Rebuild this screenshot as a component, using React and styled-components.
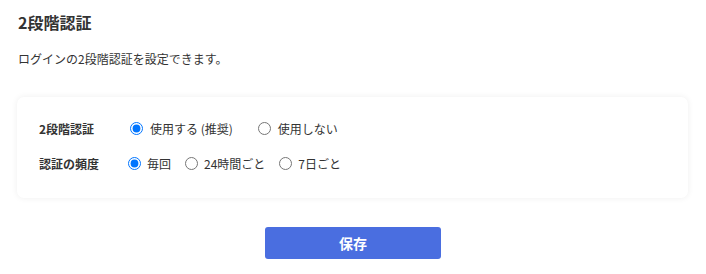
import React, { useState } from 'react'
import styled, { createGlobalStyle } from 'styled-components'

const GlobalStyle = createGlobalStyle`
  body {
    margin: 0;
    background: #ffffff;
    font-family: "Noto Sans CJK JP", "Noto Sans", sans-serif;
    color: #333333;
  }
`

const Page = styled.div`
  padding: 10px 18px 0 18px;
`

const Title = styled.h2`
  margin: 0;
  font-size: 16px;
  line-height: 24px;
  font-weight: 700;
  color: #333333;
`

const Description = styled.p`
  margin: 16px 0 0 0;
  font-size: 12px;
  line-height: 18px;
  color: #333333;
`

const Card = styled.section`
  margin-top: 29px;
  margin-left: -1px;
  background: #ffffff;
  border-radius: 7px;
  box-shadow: 0 0 6px rgba(0, 0, 0, 0.07);
  padding: 19px 22px 23px 22px;
  display: flex;
  flex-direction: column;
  gap: 11px;
`

const Row = styled.div`
  display: flex;
  align-items: center;
  height: 24px;
`

const Label = styled.span`
  width: 84px;
  flex-shrink: 0;
  font-size: 12px;
  font-weight: 700;
  color: #333333;
`

const Options = styled.div`
  display: flex;
  align-items: center;
  padding-left: ${p => p.$indent || 0}px;
`

const Option = styled.label`
  display: flex;
  align-items: center;
  gap: ${p => p.$gap || 3}px;
  margin-right: ${p => p.$space || 9}px;
  font-size: 12px;
  color: #333333;
  white-space: pre;
  cursor: pointer;
`

const Radio = styled.input`
  margin: 0 3px 0 5px;
  width: 13px;
  height: 13px;
`

const Actions = styled.div`
  display: flex;
  justify-content: center;
  margin-top: 29px;
`

const SaveButton = styled.button`
  width: 176px;
  height: 32px;
  border: none;
  border-radius: 3px;
  background: #4a6ee0;
  color: #ffffff;
  font-family: inherit;
  font-size: 14px;
  font-weight: 700;
  cursor: pointer;
`

export default function App() {
  const [enabled, setEnabled] = useState('on')
  const [freq, setFreq] = useState('every')

  return (
    <>
      <GlobalStyle />
      <Page>
        <Title>2段階認証</Title>
        <Description>ログインの2段階認証を設定できます。</Description>
        <Card>
          <Row>
            <Label>2段階認証</Label>
            <Options $indent={2}>
              <Option $space={20} $gap={4}>
                <Radio type="radio" name="tfa" checked={enabled === 'on'} onChange={() => setEnabled('on')} />
                使用する (推奨)
              </Option>
              <Option $gap={4}>
                <Radio type="radio" name="tfa" checked={enabled === 'off'} onChange={() => setEnabled('off')} />
                使用しない
              </Option>
            </Options>
          </Row>
          <Row>
            <Label>認証の頻度</Label>
            <Options>
              <Option>
                <Radio type="radio" name="freq" checked={freq === 'every'} onChange={() => setFreq('every')} />
                毎回
              </Option>
              <Option>
                <Radio type="radio" name="freq" checked={freq === '24h'} onChange={() => setFreq('24h')} />
                24時間ごと
              </Option>
              <Option>
                <Radio type="radio" name="freq" checked={freq === '7d'} onChange={() => setFreq('7d')} />
                7日ごと
              </Option>
            </Options>
          </Row>
        </Card>
        <Actions>
          <SaveButton>保存</SaveButton>
        </Actions>
      </Page>
    </>
  )
}
